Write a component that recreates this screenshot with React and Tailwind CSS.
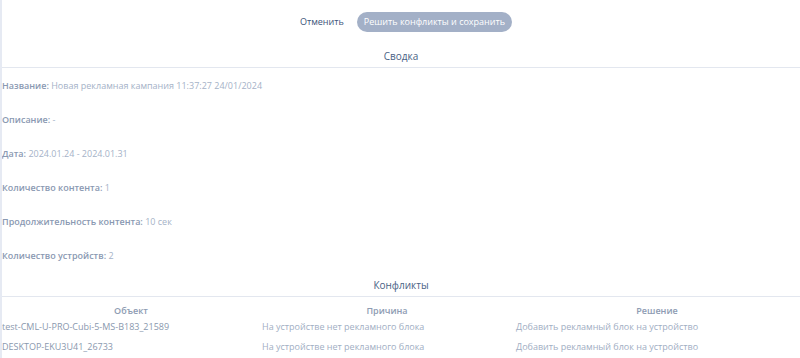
import React from "react";

const rows = [
  ["Название:", "Новая рекламная кампания 11:37:27 24/01/2024"],
  ["Описание:", "-"],
  ["Дата:", "2024.01.24 - 2024.01.31"],
  ["Количество контента:", "1"],
  ["Продолжительность контента:", "10 сек"],
  ["Количество устройств:", "2"],
];

const conflicts = [
  ["test-CML-U-PRO-Cubi-5-MS-B183_21589", "На устройстве нет рекламного блока", "Добавить рекламный блок на устройство"],
  ["DESKTOP-EKU3U41_26733", "На устройстве нет рекламного блока", "Добавить рекламный блок на устройство"],
];

export default function App() {
  return (
    <div
      className="w-[800px] h-[358px] overflow-hidden bg-white border-l-2 border-[#e6eaf3] text-[9px]"
      style={{ fontFamily: '"Open Sans", sans-serif' }}
    >
      <div className="flex justify-center items-center gap-[13px] pt-[12px] pl-[10px]">
        <span className="text-[#3c5479] leading-[20px]">Отменить</span>
        <div className="h-[20px] px-[7px] rounded-full bg-[#a3b0c7] text-white leading-[20px]">
          Решить конфликты и сохранить
        </div>
      </div>
      <div className="mt-[16px] text-center text-[10px] text-[#4a6285] leading-[16px] pb-[3px] border-b border-[#e3e7ef]">
        Сводка
      </div>
      <div className="flex flex-col pt-[10px]">
        {rows.map(([k, v]) => (
          <div key={k} className="h-[34px] leading-[16px] text-[#a5b2c7]">
            <span className="font-semibold text-[#8a99b2]">{k}</span> {v}
          </div>
        ))}
      </div>
      <div className="-mt-[5px] text-center text-[10px] text-[#4a6285] leading-[16px] pb-[3px] border-b border-[#e3e7ef]">
        Конфликты
      </div>
      <div className="grid grid-cols-[258px_254px_1fr] pt-[8px]">
        <div className="text-center font-semibold text-[#8e9cb3] leading-[12px]">Объект</div>
        <div className="text-center font-semibold text-[#8e9cb3] leading-[12px]">Причина</div>
        <div className="text-center font-semibold text-[#8e9cb3] leading-[12px]">Решение</div>
        {conflicts.map((r, i) => (
          <React.Fragment key={i}>
            <div className="text-[#8a98ae] leading-[20px]">{r[0]}</div>
            <div className="text-[#a1aec3] leading-[20px] pl-[2px]">{r[1]}</div>
            <div className="text-[#a1aec3] leading-[20px] pl-[2px]">{r[2]}</div>
          </React.Fragment>
        ))}
      </div>
    </div>
  );
}
